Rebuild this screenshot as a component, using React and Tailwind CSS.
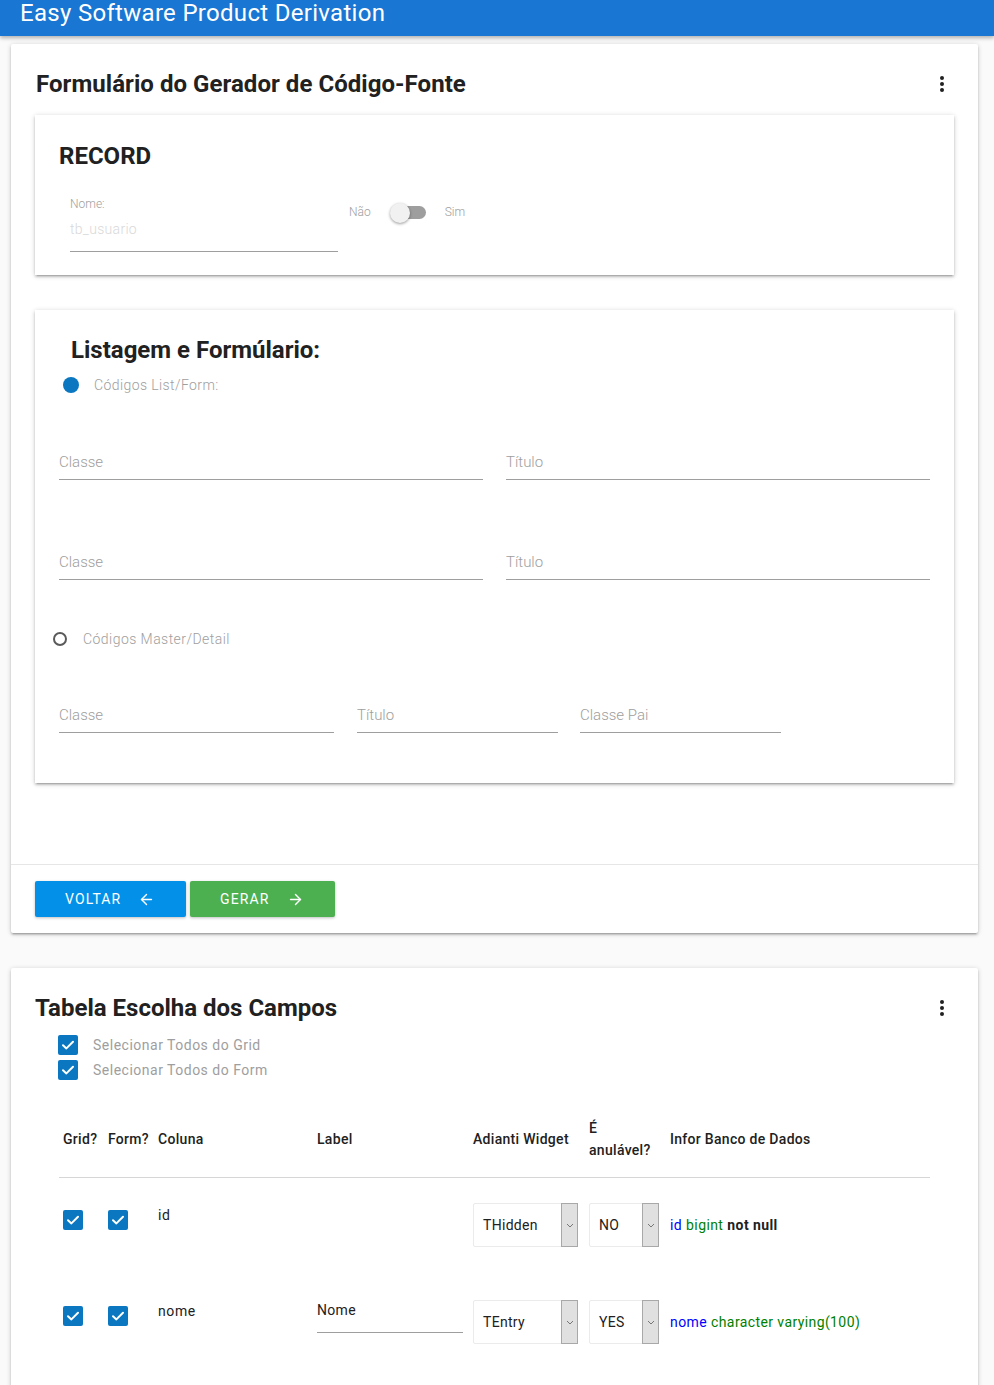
import React from "react";
import { ArrowLeft, ArrowRight } from "lucide-react";

function Kebab() {
  return (
    <svg width="24" height="24" viewBox="0 0 24 24" className="shrink-0">
      <circle cx="12" cy="6" r="2" fill="#212121" />
      <circle cx="12" cy="12" r="2" fill="#212121" />
      <circle cx="12" cy="18" r="2" fill="#212121" />
    </svg>
  );
}

function Check() {
  return (
    <div className="w-[20px] h-[20px] rounded-[2px] bg-[#0a77c0] flex items-center justify-center">
      <svg width="20" height="20" viewBox="0 0 20 20">
        <path d="M5 10.2 L8.4 13.4 L15 6.8" fill="none" stroke="#fff" strokeWidth="2" strokeLinecap="round" strokeLinejoin="round" />
      </svg>
    </div>
  );
}

function Field({ label, className }) {
  return (
    <div className={"border-b border-[#9e9e9e] pb-[7px] text-[15px] leading-[20px] font-light text-[#9e9e9e] " + (className || "")}>
      {label}
    </div>
  );
}

function Select({ value, wide }) {
  return (
    <div className={(wide ? "w-[105px]" : "w-[70px]") + " h-[44px] flex border border-[#ebebeb] bg-white rounded-[2px]"}>
      <div className="flex-1 flex items-center pl-[9px] text-[14px] text-[#212121] tracking-[0.3px]">{value}</div>
      <div className="w-[17px] -my-px -mr-px bg-[#e0e0e0] border border-[#a8a8a8] flex items-center justify-center">
        <svg width="8" height="5" viewBox="0 0 8 5">
          <path d="M1 1 L4 4 L7 1" fill="none" stroke="#777" strokeWidth="1" />
        </svg>
      </div>
    </div>
  );
}

export default function App() {
  const card = "bg-white shadow-[0_2px_2px_0_rgba(0,0,0,0.14),0_3px_1px_-2px_rgba(0,0,0,0.12),0_1px_5px_0_rgba(0,0,0,0.2)]";
  const cols = "grid grid-cols-[45px_50px_159px_156px_116px_81px_1fr]";
  return (
    <div className="h-[1385px] overflow-hidden bg-[#fafafa] [font-family:Roboto,'Noto_Sans',sans-serif] text-[#212121]">
      <header className="h-[36px] bg-[#1976d2] shadow-[0_2px_4px_rgba(0,0,0,0.3)] pl-[20px] pt-[1px] text-white text-[24px] leading-[24px] tracking-[0.3px] relative z-10">
        Easy Software Product Derivation
      </header>

      <div className="ml-[11px] w-[967px] pt-[8px]">
        {/* Card 1 */}
        <div className={card + " rounded-[2px] pb-[16px]"}>
          <div className="flex items-center justify-between pl-[25px] pr-[24px] pt-[24px]">
            <h1 className="text-[24px] leading-[32px] font-bold tracking-[0.05px]">Formulário do Gerador de Código-Fonte</h1>
            <Kebab />
          </div>

          {/* RECORD card */}
          <div className={card + " mx-[24px] mt-[15px] pt-[25px] pb-[23px] px-[24px]"}>
            <h2 className="text-[24px] leading-[32px] font-bold">RECORD</h2>
            <div className="flex items-start mt-[24px] pl-[11px]">
              <div className="w-[268px]">
                <div className="text-[12px] leading-[16px] font-light text-[#9e9e9e]">Nome:</div>
                <div className="pt-[7px] pb-[12px] border-b border-[#9e9e9e] text-[14px] leading-[20px] font-light tracking-[0.3px] text-[#d9d9d9]">tb_usuario</div>
              </div>
              <div className="flex items-center h-[20px] mt-[6px] ml-[11px] text-[12px] font-light text-[#9e9e9e]">
                <span>Não</span>
                <div className="relative w-[36px] h-[20px] ml-[19px]">
                  <div className="absolute left-[2px] top-[4px] w-[34px] h-[13px] rounded-full bg-[#9e9e9e]"></div>
                  <div className="absolute left-0 top-[1px] w-[20px] h-[20px] rounded-full bg-[#f1f1f1] shadow-[0_1px_3px_rgba(0,0,0,0.4)]"></div>
                </div>
                <span className="ml-[19px]">Sim</span>
              </div>
            </div>
          </div>

          {/* Listagem card */}
          <div className={card + " mx-[24px] mt-[35px] pt-[24px] pb-[50px]"}>
            <h2 className="pl-[36px] text-[24px] leading-[32px] font-bold">Listagem e Formúlario:</h2>
            <div className="flex items-center h-[20px] mt-[9px] pl-[28px]">
              <div className="w-[16px] h-[16px] rounded-full bg-[#0a77c0]"></div>
              <span className="ml-[15px] text-[14px] font-light tracking-[0.4px] text-[#9e9e9e]">Códigos List/Form:</span>
            </div>
            <div className="grid grid-cols-2 gap-x-[23px] px-[24px] mt-[57px]">
              <Field label="Classe" />
              <Field label="Título" />
            </div>
            <div className="grid grid-cols-2 gap-x-[23px] px-[24px] mt-[72px]">
              <Field label="Classe" />
              <Field label="Título" />
            </div>
            <div className="flex items-center h-[20px] mt-[49px] pl-[18px]">
              <div className="w-[14px] h-[14px] rounded-full border-2 border-[#5a5a5a]"></div>
              <span className="ml-[16px] text-[14px] font-light tracking-[0.45px] text-[#9e9e9e]">Códigos Master/Detail</span>
            </div>
            <div className="flex px-[24px] mt-[56px]">
              <Field label="Classe" className="w-[275px]" />
              <Field label="Título" className="w-[201px] ml-[23px]" />
              <Field label="Classe Pai" className="w-[201px] ml-[22px]" />
            </div>
          </div>

          <div className="mt-[81px] border-t border-[#e6e6e6]"></div>
          <div className="flex gap-[4px] px-[24px] pt-[16px]">
            <button className="h-[36px] w-[151px] flex items-center pl-[30px] rounded-[2px] bg-[#0290e8] text-white text-[14px] tracking-[1.1px] shadow-[0_1px_3px_rgba(0,0,0,0.25)]">
              VOLTAR
              <ArrowLeft size={17} strokeWidth={2} className="ml-[17px]" />
            </button>
            <button className="h-[36px] w-[145px] flex items-center pl-[30px] rounded-[2px] bg-[#4caf50] text-white text-[14px] tracking-[1.1px] shadow-[0_1px_3px_rgba(0,0,0,0.25)]">
              GERAR
              <ArrowRight size={17} strokeWidth={2} className="ml-[18px]" />
            </button>
          </div>
        </div>

        {/* Card 3 */}
        <div className={card + " rounded-[2px] mt-[35px] px-[24px] pt-[24px] pb-[200px]"}>
          <div className="flex items-center justify-between">
            <h2 className="text-[24px] leading-[32px] font-bold">Tabela Escolha dos Campos</h2>
            <Kebab />
          </div>
          <div className="ml-[23px] mt-[11px] flex flex-col gap-[5px]">
            <div className="flex items-center h-[20px]">
              <Check />
              <span className="ml-[15px] text-[14px] tracking-[0.5px] text-[#9e9e9e]">Selecionar Todos do Grid</span>
            </div>
            <div className="flex items-center h-[20px]">
              <Check />
              <span className="ml-[15px] text-[14px] tracking-[0.5px] text-[#9e9e9e]">Selecionar Todos do Form</span>
            </div>
          </div>

          <div className="mx-[24px] mt-[21px]">
            <div className={cols + " h-[77px] items-center border-b border-[#d6d6d6] text-[14px] font-medium leading-[22px] tracking-[0.3px]"}>
              <div className="pl-[4px]">Grid?</div>
              <div className="pl-[4px]">Form?</div>
              <div className="pl-[4px]">Coluna</div>
              <div className="pl-[4px]">Label</div>
              <div className="pl-[4px] whitespace-nowrap">Adianti Widget</div>
              <div className="pl-[4px]">É<br />anulável?</div>
              <div className="pl-[4px] whitespace-nowrap">Infor Banco de Dados</div>
            </div>

            <div className={cols + " h-[96px] items-start text-[14px]"}>
              <div className="pl-[4px] pt-[32px]"><Check /></div>
              <div className="pl-[4px] pt-[32px]"><Check /></div>
              <div className="pl-[4px] pt-[27px] leading-[20px] tracking-[0.6px]">id</div>
              <div></div>
              <div className="pl-[4px] pt-[25px]"><Select value="THidden" wide /></div>
              <div className="pl-[4px] pt-[25px]"><Select value="NO" /></div>
              <div className="pl-[4px] mt-[25px] h-[44px] flex items-center whitespace-nowrap tracking-[0.4px]">
                <span className="text-[#0000ff]">id</span>
                <span className="text-[#008000] ml-[4px]">bigint</span>
                <span className="font-bold ml-[4px]">not null</span>
              </div>
            </div>

            <div className={cols + " h-[96px] items-start text-[14px]"}>
              <div className="pl-[4px] pt-[32px]"><Check /></div>
              <div className="pl-[4px] pt-[32px]"><Check /></div>
              <div className="pl-[4px] pt-[27px] leading-[20px] tracking-[0.6px]">nome</div>
              <div className="pl-[4px] pt-[26px]">
                <div className="w-[146px] pb-[12px] border-b border-[#9e9e9e] leading-[20px] tracking-[0.3px]">Nome</div>
              </div>
              <div className="pl-[4px] pt-[26px]"><Select value="TEntry" wide /></div>
              <div className="pl-[4px] pt-[26px]"><Select value="YES" /></div>
              <div className="pl-[4px] mt-[26px] h-[44px] flex items-center whitespace-nowrap tracking-[0.4px]">
                <span className="text-[#0000ff]">nome</span>
                <span className="text-[#008000] ml-[4px]">character varying(100)</span>
              </div>
            </div>
          </div>
        </div>
      </div>
    </div>
  );
}
